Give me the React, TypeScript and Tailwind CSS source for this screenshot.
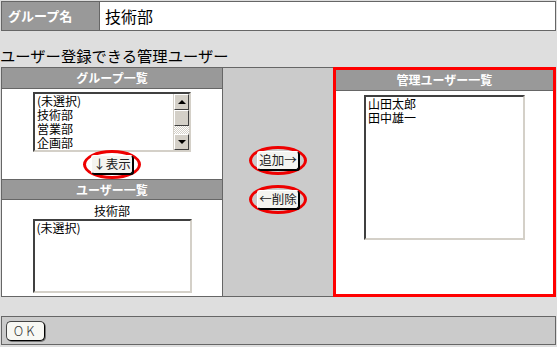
const font = "font-['Noto_Sans_CJK_JP','Noto_Sans',sans-serif]";

const Scrollbar = () => (
  <div className="flex w-[16px] flex-col border-l border-[#d4d0c8]">
    <div className="flex h-[16px] items-center justify-center border border-t-white border-l-white border-r-[#404040] border-b-[#404040] bg-[#d4d0c8]">
      <div className="h-0 w-0 border-x-[4px] border-b-[4px] border-x-transparent border-b-black" />
    </div>
    <div className="h-[16px] border border-t-white border-l-white border-r-[#404040] border-b-[#404040] bg-[#d4d0c8]" />
    <div className="flex-1 bg-[repeating-conic-gradient(#d4d0c8_0_25%,#ffffff_0_50%)] bg-[length:2px_2px]" />
    <div className="flex h-[16px] items-center justify-center border border-t-white border-l-white border-r-[#404040] border-b-[#404040] bg-[#d4d0c8]">
      <div className="h-0 w-0 border-x-[4px] border-t-[4px] border-x-transparent border-t-black" />
    </div>
  </div>
);

const ListBox = ({ items, w, h, scroll }: { items: string[]; w: string; h: string; scroll?: boolean }) => (
  <div className={`${w} ${h} flex border-2 border-t-[#404040] border-l-[#404040] border-r-[#d4d0c8] border-b-[#d4d0c8] bg-white`}>
    <div className="flex-1 overflow-hidden pl-[2px] text-[12px] leading-[14px] text-black">
      {items.map((it) => (
        <div key={it} className="h-[14px]">{it}</div>
      ))}
    </div>
    {scroll && <Scrollbar />}
  </div>
);

const Btn = ({ label, className = "" }: { label: string; className?: string }) => (
  <div className={`relative ${className}`}>
    <div className="absolute -inset-x-[8px] -inset-y-[5px] rounded-[50%] border-[3px] border-[#ee0000]" />
    <div className="relative flex h-[19px] items-center rounded-[3px] border border-t-white border-l-white border-r-black border-b-black bg-[#f4f4f0] px-[1px] text-[12.5px] leading-none text-[#222] shadow-[1px_1px_0_#000]">
      {label}
    </div>
  </div>
);

const Header = ({ title, className = "" }: { title: string; className?: string }) => (
  <div className={`flex h-[21px] items-center justify-center bg-[#999999] text-[12px] font-bold text-white ${className}`}>
    {title}
  </div>
);

export default function App() {
  return (
    <div className={`h-[347px] w-[557px] overflow-hidden bg-[#dedede] ${font}`}>
      <div className="mx-[1px] mt-[1px] flex h-[30px] border border-[#666666]">
        <div className="flex w-[97px] items-center bg-[#999999] pl-[6px] text-[13px] font-bold text-white">グループ名</div>
        <div className="flex flex-1 items-center border-l border-[#666666] bg-white pl-[5px] text-[16px] text-black">技術部</div>
      </div>

      <div className="flex h-[36px] items-end pb-[4px] text-[15.3px] leading-none text-black">ユーザー登録できる管理ユーザー</div>

      <div className="mx-[1px] flex h-[230px] border border-[#666666]">
        <div className="flex w-[221px] flex-col border-r border-[#666666] bg-white">
          <Header title="グループ一覧" className="border-b border-[#666666]" />
          <div className="flex flex-col items-center pt-[3px]">
            <ListBox items={["(未選択)", "技術部", "営業部", "企画部"]} w="w-[158px]" h="h-[60px]" scroll />
            <Btn label="↓表示" className="mt-[3px]" />
          </div>
          <Header title="ユーザー一覧" className="mt-[5px] h-[20px] border-y border-[#666666]" />
          <div className="flex flex-col items-center">
            <div className="mt-[3px] text-[12px] leading-[16px] text-black">技術部</div>
            <ListBox items={["(未選択)"]} w="w-[159px]" h="h-[74px]" />
          </div>
        </div>

        <div className="flex w-[110px] flex-col items-center justify-center gap-[20px] bg-[#cbcbcb] pb-[4px]">
          <Btn label="追加→" />
          <Btn label="←削除" />
        </div>

        <div className="-mr-[1px] -mt-[1px] -mb-[1px] flex flex-1 flex-col border-[3px] border-[#ff0000] bg-white">
          <Header title="管理ユーザー一覧" className="h-[18px] border-b border-[#666666]" />
          <div className="flex justify-center pt-[4px]">
            <ListBox items={["山田太郎", "田中雄一"]} w="w-[161px]" h="h-[145px]" />
          </div>
        </div>
      </div>

      <div className="mx-[1px] mt-[19px] flex h-[29px] items-center border border-[#666666] bg-[#cbcbcb] pl-[4px]">
        <div className="flex h-[20px] w-[39px] items-center justify-center rounded-[5px] border border-t-[#444] border-l-[#444] border-r-black border-b-black bg-[#f8f8f4] text-[13px] font-light tracking-[3px] text-[#333] shadow-[1px_1px_0_#777]">
          OK
        </div>
      </div>
    </div>
  );
}
